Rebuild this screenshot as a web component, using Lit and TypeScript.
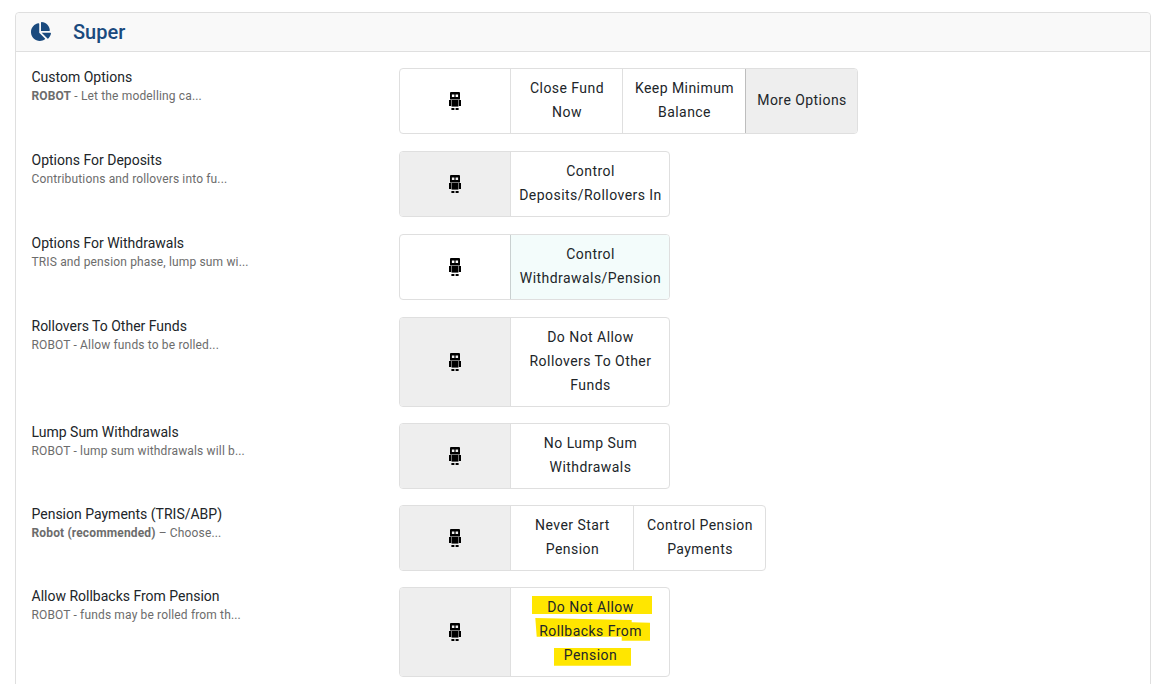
import { LitElement, html, css, svg } from "lit";
import { customElement } from "lit/decorators.js";

type Seg = { t?: string; w: number; on?: boolean; teal?: boolean; hl?: boolean; robot?: boolean };
type Row = { title: string; strong?: string; sub: string; h: number; segs: Seg[] };

const robot = (on: boolean): Seg => ({ robot: true, w: 110, on });

const rows: Row[] = [
  { title: "Custom Options", strong: "ROBOT", sub: " - Let the modelling ca...", h: 66, segs: [robot(false), { t: "Close Fund Now", w: 112 }, { t: "Keep Minimum Balance", w: 123 }, { t: "More Options", w: 112, on: true }] },
  { title: "Options For Deposits", sub: "Contributions and rollovers into fu...", h: 66, segs: [robot(true), { t: "Control Deposits/Rollovers In", w: 159 }] },
  { title: "Options For Withdrawals", sub: "TRIS and pension phase, lump sum wi...", h: 66, segs: [robot(false), { t: "Control Withdrawals/Pension", w: 159, teal: true }] },
  { title: "Rollovers To Other Funds", sub: "ROBOT - Allow funds to be rolled...", h: 90, segs: [robot(true), { t: "Do Not Allow Rollovers To Other Funds", w: 159 }] },
  { title: "Lump Sum Withdrawals", sub: "ROBOT - lump sum withdrawals will b...", h: 66, segs: [robot(true), { t: "No Lump Sum Withdrawals", w: 159 }] },
  { title: "Pension Payments (TRIS/ABP)", strong: "Robot (recommended)", sub: " – Choose...", h: 66, segs: [robot(true), { t: "Never Start Pension", w: 123 }, { t: "Control Pension Payments", w: 132 }] },
  { title: "Allow Rollbacks From Pension", sub: "ROBOT - funds may be rolled from th...", h: 90, segs: [robot(true), { t: "Do Not Allow Rollbacks From Pension", w: 159, hl: true }] },
];

const robotIcon = svg`<svg class="robot" width="12" height="18" viewBox="0 0 12 18" aria-hidden="true">
  <path fill="#000" fill-rule="evenodd" d="M2 0h8a1 1 0 0 1 1 1v6.4h-10v-6.4a1 1 0 0 1 1-1zM2.9 2.4v2.6h2.5v-2.6zM6.6 2.4v2.6h2.5v-2.6z"/>
  <rect x="2.6" y="8" width="6.8" height="6.6" fill="#000"/>
  <rect x="0" y="8" width="2.2" height="6" fill="#000"/>
  <rect x="9.8" y="8" width="2.2" height="6" fill="#000"/>
  <rect x="2.4" y="16" width="3" height="2" fill="#000"/>
  <rect x="6.6" y="16" width="3" height="2" fill="#000"/>
</svg>`;

const pieIcon = svg`<svg class="pie" width="20" height="19" viewBox="0 0 544 512" aria-hidden="true">
  <path fill="#1a4a7e" d="M527.79 288H290.5l158.03 158.03c6.04 6.04 15.98 6.53 22.19 .68 38.7-36.46 65.32-85.61 73.13-140.86 1.34-9.46-6.51-17.85-16.06-17.85zm-15.83-64.8C503.72 103.74 408.26 8.28 288.8 .04 279.68-.59 272 7.1 272 16.24V240h223.77c9.14 0 16.82-7.68 16.19-16.8zM224 288V50.71c0-9.55-8.39-17.4-17.84-16.06C86.99 51.49-4.1 155.6 .14 280.37 4.5 408.51 114.83 513.59 243.03 511.98c50.4-.63 96.97-16.87 135.26-44.03 7.9-5.6 8.42-17.23 1.57-24.08L224 288z"/>
</svg>`;

const hlShapes = svg`<svg class="hl" width="159" height="88" viewBox="0 0 159 88" aria-hidden="true">
  <path fill="#ffe600" d="M21 8H141V26H21z"/>
  <path fill="#ffe600" d="M24.3 30L120.7 32V34.3L139 34.7V52.7H110.7V48.7H25.7z"/>
  <path fill="#ffe600" d="M43 60H120V77.7H43z"/>
</svg>`;

@customElement("app-root")
export class AppRoot extends LitElement {
  static styles = css`
    :host {
      display: block;
      height: 684px;
      overflow: hidden;
      box-sizing: border-box;
      padding: 12px 20px 0 15px;
      background: #fff;
      font-family: Roboto, "Liberation Sans", sans-serif;
      color: #212529;
    }
    .card {
      border: 1px solid #dfdfdf;
      border-radius: 4px;
      height: 720px;
      box-sizing: border-box;
    }
    .head {
      display: flex;
      align-items: center;
      height: 39px;
      box-sizing: border-box;
      padding: 0 15px;
      gap: 22px;
      background: #f9f9f9;
      border-bottom: 1px solid #dfdfdf;
      border-radius: 4px 4px 0 0;
    }
    .pie { flex: none; margin-top: -2px; }
    .head h2 {
      margin: 0;
      font-size: 20px;
      font-weight: 500;
      line-height: 24px;
      color: #1a4a7e;
    }
    .body {
      display: flex;
      flex-direction: column;
      gap: 16px;
      padding: 16px 16px 0 15.5px;
    }
    .row { display: flex; }
    .row:nth-child(2), .row:nth-child(3), .row:nth-child(4) { margin-top: 1px; }
    .label { width: 367.5px; flex: none; }
    .title { font-size: 14px; line-height: 18px; color: #212529; }
    .sub { font-size: 12px; line-height: 18px; color: #6c6c6c; margin-top: 1px; letter-spacing: 0.15px; }
    .sub b { font-weight: 700; }
    .group {
      display: flex;
      border: 1px solid #dfdfdf;
      border-radius: 4px;
      overflow: hidden;
      box-sizing: border-box;
    }
    .seg {
      position: relative;
      display: flex;
      align-items: center;
      justify-content: center;
      text-align: center;
      box-sizing: border-box;
      padding: 0 6.5px 2px 7.5px;
      font-size: 14px;
      line-height: 24px;
      letter-spacing: 0.45px;
      border-left: 1px solid #dfdfdf;
      color: #212529;
    }
    .seg:first-child { border-left: 0; padding: 0; }
    .seg.on { background: #eeeeee; }
    .seg.on:not(:first-child) { border-left-color: #bdbdbd; }
    .seg.teal { background: #f3fcfb; border-left-color: #c9d0d0; }
    .seg span { position: relative; }
    .hl { position: absolute; left: 0; top: 0; }
  `;

  render() {
    return html`<div class="card">
      <div class="head">${pieIcon}<h2>Super</h2></div>
      <div class="body">
        ${rows.map(
          (r) => html`<div class="row">
            <div class="label">
              <div class="title">${r.title}</div>
              <div class="sub">${r.strong ? html`<b>${r.strong}</b>` : ""}${r.sub}</div>
            </div>
            <div class="group" style="height:${r.h}px">
              ${r.segs.map(
                (s) => html`<div
                  class="seg ${s.on ? "on" : ""} ${s.teal ? "teal" : ""}"
                  style="width:${s.w}px"
                >
                  ${s.hl ? hlShapes : ""}${s.robot ? robotIcon : html`<span>${s.t}</span>`}
                </div>`
              )}
            </div>
          </div>`
        )}
      </div>
    </div>`;
  }
}
